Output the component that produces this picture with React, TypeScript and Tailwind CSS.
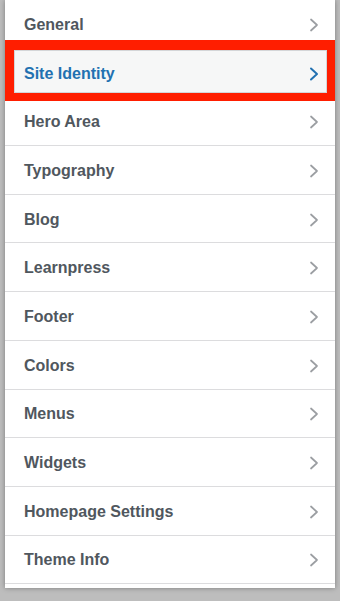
const ITEMS = [
  "General",
  "Site Identity",
  "Hero Area",
  "Typography",
  "Blog",
  "Learnpress",
  "Footer",
  "Colors",
  "Menus",
  "Widgets",
  "Homepage Settings",
  "Theme Info",
];

function Chevron({ active }: { active?: boolean }) {
  return (
    <svg
      width="10"
      height="14"
      viewBox="0 0 10 14"
      fill="none"
      stroke={active ? "#2271b1" : "#9b9ea2"}
      strokeWidth={active ? 2 : 1.7}
      strokeLinecap="round"
      strokeLinejoin="round"
    >
      <polyline points="2 1.5 8 7 2 12.5" />
    </svg>
  );
}

export default function App() {
  return (
    <div className="w-[340px] h-[601px] bg-[#bdbdbd] overflow-hidden relative font-['Liberation_Sans',Arial,sans-serif]">
      <div className="ml-[5px] w-[330px] h-[588px] bg-white shadow-[0_0_5px_rgba(0,0,0,0.35)] relative">
        <ul>
          {ITEMS.map((label) => {
            const active = label === "Site Identity";
            return (
              <li
                key={label}
                className={`h-[48.7px] border-b border-[#dcdcde] flex items-center justify-between pt-[2px] pl-[19px] pr-[16px] ${
                  active ? "bg-[#f6f7f7]" : "bg-white"
                }`}
              >
                <span
                  className={`text-[16px] font-semibold ${
                    active ? "text-[#2271b1]" : "text-[#50575e]"
                  }`}
                >
                  {label}
                </span>
                <Chevron active={active} />
              </li>
            );
          })}
        </ul>

        {/* annotation box */}
        <div className="absolute left-0 top-[40px] w-[330px] h-[61px] border-[#ff1e00] border-l-[9px] border-r-[8px] border-t-[10px] border-b-[8px]">
          <div className="w-full h-full border border-[#d4d6d8]" />
        </div>
      </div>
    </div>
  );
}
